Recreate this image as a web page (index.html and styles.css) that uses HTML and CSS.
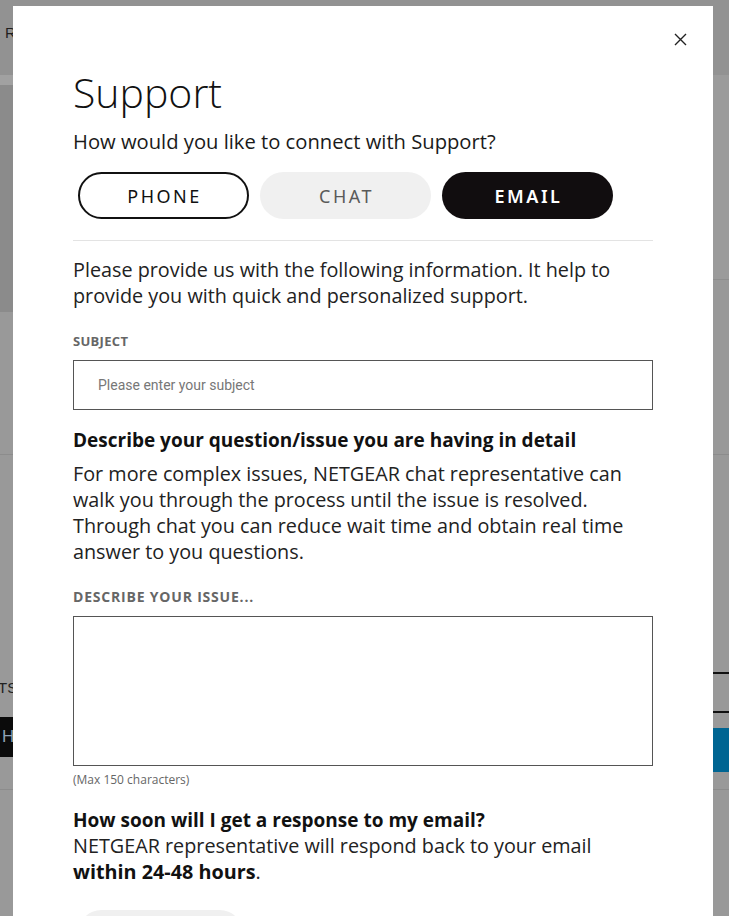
FILE: index.html
```html
<!DOCTYPE html>
<html lang="en">
<head>
<meta charset="utf-8">
<title>Support</title>
<link rel="stylesheet" href="styles.css">
</head>
<body>
<div class="backdrop">
  <header class="bg-header"><span class="bg-logo">R</span></header>
  <div class="bg-hero">
    <div class="bg-hero-left">
      <div class="bg-band"></div>
      <div class="bg-image"></div>
    </div>
    <div class="bg-hero-right">
      <div class="bg-panel"></div>
    </div>
  </div>
  <div class="bg-products">
    <div class="bg-col-left">
      <span class="bg-text">TS</span>
      <span class="bg-btn-dark">H</span>
    </div>
    <div class="bg-col-right">
      <span class="bg-btn-outline">PO</span>
      <span class="bg-btn-blue">PP</span>
    </div>
  </div>
</div>

<div class="modal" role="dialog" aria-labelledby="support-title">
  <button class="close" aria-label="Close">
    <svg width="13" height="13" viewBox="0 0 13 13"><path d="M1 1 L12 12 M12 1 L1 12" stroke="#222" stroke-width="1.4" fill="none"/></svg>
  </button>
  <h1 id="support-title" class="title">Support</h1>
  <p class="subtitle">How would you like to connect with Support?</p>
  <div class="tabs">
    <button class="tab tab-outline">PHONE</button>
    <button class="tab tab-grey">CHAT</button>
    <button class="tab tab-active">EMAIL</button>
  </div>
  <hr class="divider">
  <p class="text">Please provide us with the following information. It help to provide you with quick and personalized support.</p>
  <label class="label" for="subject">SUBJECT</label>
  <input id="subject" class="input" type="text" placeholder="Please enter your subject">
  <h2 class="heading">Describe your question/issue you are having in detail</h2>
  <p class="text">For more complex issues, NETGEAR chat representative can walk you through the process until the issue is resolved. Through chat you can reduce wait time and obtain real time answer to you questions.</p>
  <label class="label label-issue" for="issue">DESCRIBE YOUR ISSUE...</label>
  <textarea id="issue" class="textarea"></textarea>
  <p class="hint">(Max 150 characters)</p>
  <h2 class="heading heading-response">How soon will I get a response to my email?</h2>
  <p class="text">NETGEAR representative will respond back to your email<br><strong>within 24-48 hours</strong>.</p>
  <button class="submit">SUBMIT</button>
</div>
</body>
</html>
```
FILE: styles.css
```css
* { box-sizing: border-box; }
html, body { margin: 0; padding: 0; }
body {
  width: 729px;
  height: 916px;
  overflow: hidden;
  background: #999999;
  font-family: "Open Sans", sans-serif;
  position: relative;
}
.backdrop { width: 729px; }
.bg-header {
  height: 75px;
  background: #929292;
  padding: 21px 0 0 5px;
}
.bg-logo { font-family: "Liberation Sans", sans-serif; font-size: 15px; color: #1f1f1f; }
.bg-hero { display: grid; grid-template-columns: 1fr 1fr; height: 380px; border-bottom: 1px solid #8c8c8c; }
.bg-band { height: 10px; background: #a1a1a1; }
.bg-image { height: 227px; background: #8b8b8b; }
.bg-panel { height: 205px; background: #9b9b9b; border-bottom: 1px solid #8e8e8e; }
.bg-products { display: grid; grid-template-columns: 1fr 1fr; height: 335px; border-bottom: 1px solid #8c8c8c; }
.bg-col-left, .bg-col-right { display: flex; flex-direction: column; }
.bg-col-left { align-items: flex-start; padding-top: 224px; }
.bg-col-right { align-items: flex-end; padding-top: 217px; }
.bg-text { font-family: "Liberation Sans", sans-serif; font-size: 15px; color: #222; margin-left: -2px; height: 38px; }
.bg-btn-dark {
  width: 40px; height: 40px; background: #0b0b0b; color: #8fa2b5;
  font-family: "Liberation Sans", sans-serif; font-size: 17px; line-height: 40px; padding-left: 2px;
}
.bg-btn-outline {
  width: 40px; height: 41px; border-top: 2px solid #111; border-bottom: 2px solid #111;
  font-family: "Liberation Sans", sans-serif; font-size: 15px; color: #222; line-height: 37px;
}
.bg-btn-blue {
  width: 40px; height: 44px; margin-top: 15px; background: #006592; color: #9ab8cc;
  font-family: "Liberation Sans", sans-serif; font-size: 16px; line-height: 44px;
}

.modal {
  position: absolute;
  left: 13px;
  top: 6px;
  width: 700px;
  height: 1000px;
  background: #ffffff;
  padding: 62px 60px 40px;
  color: #1a1a1a;
}
.close {
  position: absolute;
  top: 25px;
  right: 25px;
  width: 16px; height: 16px;
  padding: 0; border: 0; background: transparent;
  display: flex; align-items: center; justify-content: center;
}
.title {
  margin: 0;
  font-size: 41px;
  line-height: 48px;
  font-weight: 300;
  color: #111;
}
.subtitle {
  margin: 12px 0 0;
  font-size: 20.2px;
  line-height: 26px;
  color: #1a1a1a;
}
.tabs {
  display: flex;
  gap: 11px;
  margin: 18px 0 0 5px;
}
.tab {
  width: 171px;
  height: 47px;
  border-radius: 24px;
  font-family: "Noto Sans", sans-serif;
  font-size: 18px;
  letter-spacing: 2.5px;
  text-indent: 2px;
  border: 0;
  padding: 0;
}
.tab-outline { background: #fff; border: 2px solid #111; color: #111; }
.tab-grey { background: #f0f0f0; color: #5a5a5a; }
.tab-active { background: #110d0f; color: #fff; font-weight: 600; }
.divider {
  margin: 21px 0 0;
  border: 0;
  border-top: 1px solid #e3e3e3;
}
.text {
  margin: 16px 0 0;
  font-size: 19.8px;
  line-height: 26px;
  color: #222;
}
.text strong { font-weight: 700; color: #111; }
.label {
  display: block;
  margin-top: 23px;
  font-family: "Open Sans", sans-serif;
  font-weight: 700;
  font-size: 13px;
  letter-spacing: 0.3px;
  color: #666;
  line-height: 18px;
}
.input {
  display: block;
  width: 580px;
  height: 50px;
  margin-top: 10px;
  border: 1px solid #555;
  padding: 0 24px;
  font-family: "Roboto", sans-serif;
  font-size: 14px;
  color: #333;
}
.input::placeholder { color: #777; }
.heading {
  margin: 17px 0 0;
  font-size: 19px;
  line-height: 26px;
  font-weight: 700;
  color: #111;
}
.heading + .text { margin-top: 8px; }
.label-issue { margin-top: 23px; font-size: 14px; letter-spacing: 0.8px; }
.textarea {
  display: block;
  width: 580px;
  height: 150px;
  margin-top: 10px;
  border: 1px solid #555;
  resize: none;
}
.hint {
  margin: 6px 0 0;
  font-size: 12px;
  line-height: 16px;
  color: #666;
}
.heading-response { margin-top: 19px; }
.heading-response + .text { margin-top: 0; }
.submit {
  margin: 25px 0 0 5px;
  width: 165px;
  height: 47px;
  border-radius: 24px;
  border: 0;
  background: #f0f0f0;
  color: #555;
  font-family: "Noto Sans", sans-serif;
  font-size: 17px;
}
```
